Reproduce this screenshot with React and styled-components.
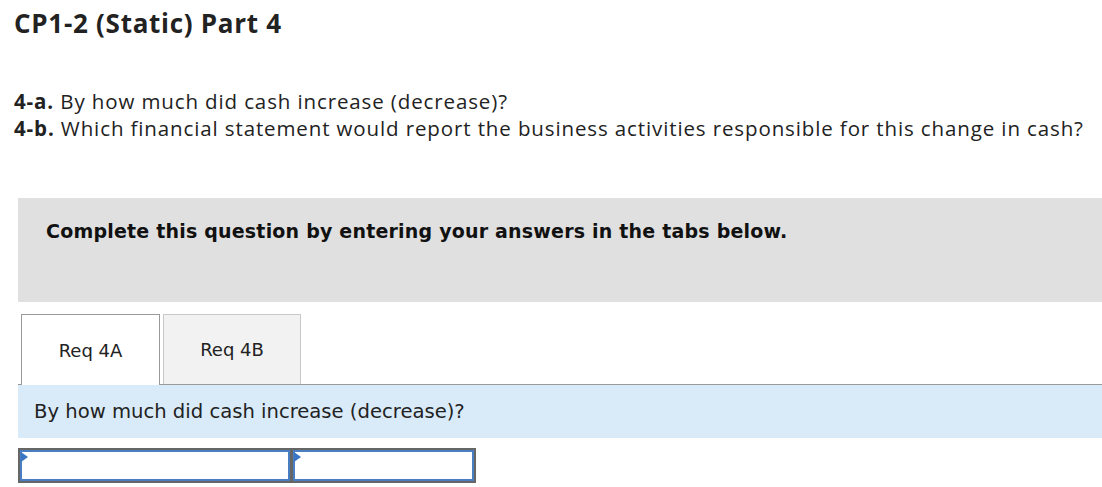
import React from "react";
import styled, { createGlobalStyle } from "styled-components";

const Global = createGlobalStyle`
  html, body { margin: 0; padding: 0; background: #fff; }
  body { font-family: "Open Sans", "Liberation Sans", sans-serif; color: #222; }
`;

const Page = styled.div`
  width: 1102px;
  padding-top: 6px;
`;

const Title = styled.h1`
  margin: 0 0 0 14px;
  font-family: "Open Sans", "Lato", sans-serif;
  font-weight: 700;
  font-size: 26px;
  letter-spacing: 0.72px;
  line-height: 34px;
  color: #222;
`;

const Questions = styled.div`
  margin: 48px 0 0 14px;
  font-family: "Open Sans", "Lato", sans-serif;
  font-size: 20.5px;
  letter-spacing: 0.88px;
  line-height: 27px;
  color: #222;
`;

const Line = styled.div`
  white-space: nowrap;
`;

const Bold = styled.b`
  font-weight: 700;
`;

const Instruction = styled.div`
  margin: 56px 0 0 18px;
  height: 104px;
  background: #e0e0e0;
  box-sizing: border-box;
  padding: 22px 0 0 28px;
  font-family: "DejaVu Sans", Verdana, sans-serif;
  font-weight: 700;
  font-size: 19px;
  letter-spacing: 0.2px;
  color: #111;
`;

const Tabs = styled.div`
  margin: 12px 0 0 18px;
  display: flex;
  align-items: flex-end;
  gap: 3px;
  border-bottom: 1px solid #999;
  padding-left: 3px;
  height: 70px;
`;

const Tab = styled.div`
  width: ${(p) => p.$w}px;
  box-sizing: border-box;
  display: flex;
  align-items: center;
  justify-content: center;
  font-family: "DejaVu Sans", Verdana, sans-serif;
  font-size: 18px;
  color: #222;
  background: ${(p) => (p.$active ? "#fff" : "#f2f2f2")};
  border: 1px solid ${(p) => (p.$active ? "#999" : "#c8c8c8")};
  border-bottom: none;
  margin-bottom: ${(p) => (p.$active ? "-1px" : "0")};
  height: ${(p) => (p.$active ? "71px" : "70px")};
`;

const Prompt = styled.div`
  margin-left: 18px;
  height: 53px;
  background: #d9ebf9;
  display: flex;
  align-items: center;
  padding-left: 16px;
  font-family: "DejaVu Sans", Verdana, sans-serif;
  font-size: 19.6px;
  color: #222;
`;

const AnswerRow = styled.div`
  margin: 10px 0 0 18px;
  width: 458px;
  height: 35px;
  box-sizing: border-box;
  border: 2px solid #666;
  display: flex;
  gap: 3px;
  background: #666;
`;

const Cell = styled.div`
  position: relative;
  width: ${(p) => p.$w}px;
  box-sizing: border-box;
  border: 2px solid #4a7ec2;
  background: #fff;
`;

const Marker = styled.span`
  position: absolute;
  left: -1px;
  top: 0;
  width: 0;
  height: 0;
  border-top: 5px solid transparent;
  border-bottom: 5px solid transparent;
  border-left: 7px solid #3a75c4;
`;

export default function App() {
  return (
    <Page>
      <Global />
      <Title>CP1-2 (Static) Part 4</Title>
      <Questions>
        <Line>
          <Bold>4-a.</Bold> By how much did cash increase (decrease)?
        </Line>
        <Line>
          <Bold>4-b.</Bold> Which financial statement would report the business activities responsible for this change in cash?
        </Line>
      </Questions>
      <Instruction>Complete this question by entering your answers in the tabs below.</Instruction>
      <Tabs>
        <Tab $active $w={139}>Req 4A</Tab>
        <Tab $w={138}>Req 4B</Tab>
      </Tabs>
      <Prompt>By how much did cash increase (decrease)?</Prompt>
      <AnswerRow>
        <Cell $w={270}><Marker /></Cell>
        <Cell $w={181}><Marker /></Cell>
      </AnswerRow>
    </Page>
  );
}
